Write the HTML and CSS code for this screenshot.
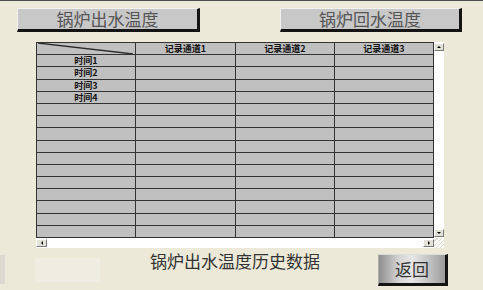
FILE: index.html
```html
<!DOCTYPE html>
<html>
<head>
  <meta charset="utf-8">
  <title>锅炉出水温度历史数据</title>
  <link rel="stylesheet" href="styles.css">
</head>
<body>
  <div class="screen">
    <div class="top">
      <div class="tab">锅炉出水温度</div>
      <div class="tab tab2">锅炉回水温度</div>
    </div>

    <div class="viewer">
      <div class="grid">
        <div class="cell corner"><svg width="98" height="11"><line x1="1" y1="0" x2="96" y2="11" stroke="#2a2a2a" stroke-width="1.3"/></svg></div>
        <div class="cell head">记录通道1</div><div class="cell head">记录通道2</div><div class="cell head">记录通道3</div>
        <div class="cell head">时间1</div><div class="cell"></div><div class="cell"></div><div class="cell"></div>
        <div class="cell head">时间2</div><div class="cell"></div><div class="cell"></div><div class="cell"></div>
        <div class="cell head">时间3</div><div class="cell"></div><div class="cell"></div><div class="cell"></div>
        <div class="cell head">时间4</div><div class="cell"></div><div class="cell"></div><div class="cell"></div>
        <div class="cell"></div><div class="cell"></div><div class="cell"></div><div class="cell"></div>
        <div class="cell"></div><div class="cell"></div><div class="cell"></div><div class="cell"></div>
        <div class="cell"></div><div class="cell"></div><div class="cell"></div><div class="cell"></div>
        <div class="cell"></div><div class="cell"></div><div class="cell"></div><div class="cell"></div>
        <div class="cell"></div><div class="cell"></div><div class="cell"></div><div class="cell"></div>
        <div class="cell"></div><div class="cell"></div><div class="cell"></div><div class="cell"></div>
        <div class="cell"></div><div class="cell"></div><div class="cell"></div><div class="cell"></div>
        <div class="cell"></div><div class="cell"></div><div class="cell"></div><div class="cell"></div>
        <div class="cell"></div><div class="cell"></div><div class="cell"></div><div class="cell"></div>
        <div class="cell"></div><div class="cell"></div><div class="cell"></div><div class="cell"></div>
        <div class="cell"></div><div class="cell"></div><div class="cell"></div><div class="cell"></div>
      </div>
      <div class="vscroll">
        <div class="sbtn"><span class="arr up"></span></div>
        <div class="sbtn"><span class="arr down"></span></div>
      </div>
      <div class="hscroll">
        <div class="sbtn"><span class="arr left"></span></div>
        <div class="sbtn"><span class="arr right"></span></div>
      </div>
      <div class="grip"></div>
    </div>

    <div class="bottom">
      <div class="edge"></div>
      <div class="haze"></div>
      <div class="caption">锅炉出水温度历史数据</div>
      <div class="back">返回</div>
    </div>
  </div>
</body>
</html>
```

FILE: styles.css
```css
body {
  margin: 0;
  background: #ece9d8;
  font-family: "Noto Sans CJK SC", "Noto Sans", sans-serif;
}

.screen {
  width: 483px;
  height: 289px;
  border-top: 1px solid #4e4e4e;
  overflow: hidden;
}

/* top buttons */
.top {
  display: flex;
  gap: 80px;
  padding: 7px 0 0 17px;
}

.tab {
  width: 183px;
  height: 24px;
  box-sizing: border-box;
  background: #c8c8c8;
  border-top: 1px solid #f2f2f2;
  border-left: 1px solid #f2f2f2;
  border-right: 3px solid #141414;
  border-bottom: 3px solid #141414;
  color: #555;
  font-size: 17px;
  line-height: 20px;
  text-align: center;
}

.tab2 {
  width: 182px;
}

/* data grid + scrollbars */
.viewer {
  display: grid;
  grid-template-columns: 398px 10px;
  grid-template-rows: 196px 10px;
  margin: 10px 0 0 36px;
  width: 408px;
}

.grid {
  display: grid;
  grid-template-columns: 98px 99px 98px 98px;
  grid-template-rows: repeat(16, 1fr);
  gap: 1px;
  padding: 1px;
  box-sizing: border-box;
  background: #333;
}

.cell {
  background: #c0c0c0;
  font-size: 9px;
  font-weight: bold;
  color: #111;
  line-height: 11px;
  text-align: center;
  overflow: hidden;
}

.corner svg {
  display: block;
}

.vscroll {
  background: #fff;
  display: flex;
  flex-direction: column;
  justify-content: space-between;
  padding: 1px 0 1px 0;
}

.hscroll {
  background: #fff;
  display: flex;
  justify-content: space-between;
  padding-top: 1px;
}

.grip {
  background: repeating-linear-gradient(135deg, #fbfaf6 0 2px, #dcd9cf 2px 3px);
}

.sbtn {
  width: 8px;
  height: 6px;
  background: #e4e1d8;
  border: 1px solid;
  border-color: #fff #7a7a7a #7a7a7a #fff;
  display: flex;
  align-items: center;
  justify-content: center;
}

.hscroll .sbtn {
  width: 9px;
}

.arr {
  width: 0;
  height: 0;
  border: 2px solid transparent;
}

.arr.up {
  border-top: 0;
  border-bottom-color: #000;
}

.arr.down {
  border-bottom: 0;
  border-top-color: #000;
}

.arr.left {
  border-left: 0;
  border-right-color: #000;
}

.arr.right {
  border-right: 0;
  border-left-color: #000;
}

/* bottom line */
.bottom {
  display: flex;
  align-items: flex-start;
  padding-right: 35px;
}

.edge {
  width: 5px;
  height: 29px;
  margin-top: 7px;
  background: #dcdad0;
}

.haze {
  width: 65px;
  height: 24px;
  margin: 10px 0 0 30px;
  background: #efede2;
}

.caption {
  margin: 3px 0 0 50px;
  font-size: 17px;
  line-height: 20px;
  color: #333;
}

.back {
  margin: 6px 0 0 auto;
  width: 70px;
  height: 32px;
  box-sizing: border-box;
  background: linear-gradient(90deg, #8e8e8e, #d4d4d4 30%, #e6e6e6 50%, #c4c4c4 75%, #9c9c9c);
  border-top: 1px solid #dcdcdc;
  border-left: 1px solid #b0b0b0;
  border-right: 3px solid #141414;
  border-bottom: 3px solid #141414;
  color: #333;
  font-size: 17px;
  line-height: 27px;
  text-align: center;
}
```
